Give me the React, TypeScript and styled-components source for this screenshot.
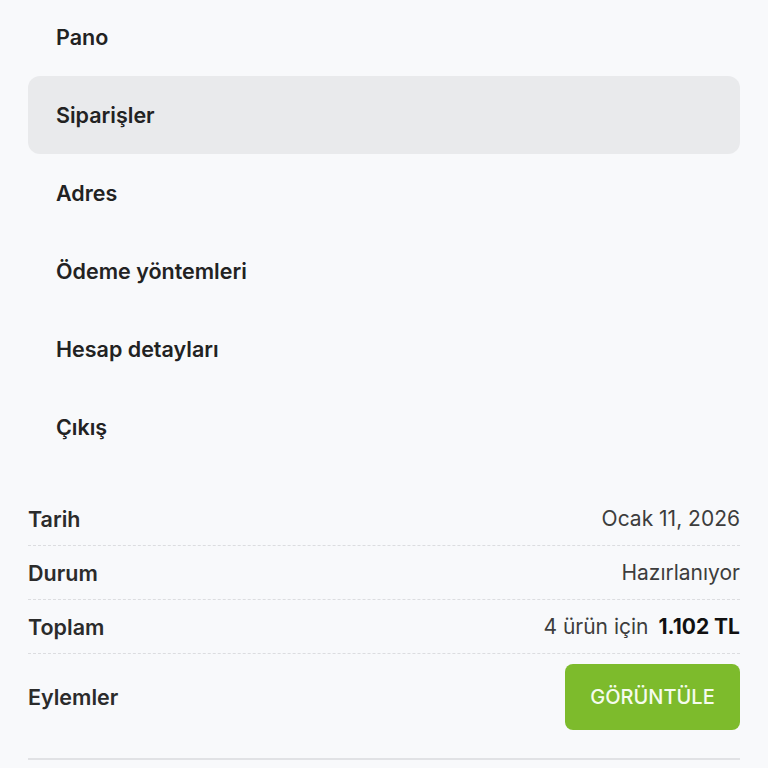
import styled, { createGlobalStyle } from "styled-components";

const GlobalStyle = createGlobalStyle`
   html, body {
      margin: 0;
      padding: 0;
      background: #f8f9fb;
      font-family: Inter, Roboto, "Noto Sans", sans-serif;
      color: #222;
      overflow: hidden;
   }
`;

const Page = styled.div`
   width: 768px;
   padding: 0 28px;
   box-sizing: border-box;
`;

const Nav = styled.ul`
   list-style: none;
   margin: -2px 0 26px;
   padding: 0;
   display: flex;
   flex-direction: column;
`;

const NavItem = styled.li<{ active?: boolean }>`
   height: 78px;
   display: flex;
   align-items: center;
   padding-left: 28px;
   border-radius: 12px;
   font-size: 21.5px;
   font-weight: 600;
   color: #222;
   background: ${({ active }) => (active ? "#e9eaec" : "transparent")};
`;

const Table = styled.div`
   display: flex;
   flex-direction: column;
   border-bottom: 2px solid #e1e2e5;
`;

const Row = styled.div<{ last?: boolean }>`
   display: flex;
   justify-content: space-between;
   align-items: center;
   height: ${({ last }) => (last ? "86px" : "53px")};
   padding-bottom: ${({ last }) => (last ? "18px" : "0")};
   border-bottom: ${({ last }) => (last ? "none" : "1.5px dashed #dcdde0")};
`;

const Label = styled.span`
   font-size: 21.5px;
   font-weight: 600;
   color: #2b2b2b;
`;

const Value = styled.span`
   font-size: 21px;
   font-weight: 400;
   color: #3d3d3d;
`;

const Amount = styled.strong`
   font-weight: 700;
   color: #111;
   margin-left: 10px;
`;

const Button = styled.button`
   width: 175px;
   height: 66px;
   border: none;
   border-radius: 8px;
   background: #7dbb2c;
   color: #f5fbee;
   font-family: Inter, Roboto, sans-serif;
   font-size: 20px;
   font-weight: 500;
   text-transform: uppercase;
   cursor: pointer;
`;

const menu = [
   "Pano",
   "Siparişler",
   "Adres",
   "Ödeme yöntemleri",
   "Hesap detayları",
   "Çıkış",
];

export default function App() {
   return (
      <Page>
         <GlobalStyle />
         <Nav>
            {menu.map((m) => (
               <NavItem key={m} active={m === "Siparişler"}>
                  {m}
               </NavItem>
            ))}
         </Nav>
         <Table>
            <Row>
               <Label>Tarih</Label>
               <Value>Ocak 11, 2026</Value>
            </Row>
            <Row>
               <Label>Durum</Label>
               <Value>Hazırlanıyor</Value>
            </Row>
            <Row>
               <Label>Toplam</Label>
               <Value>
                  4 ürün için<Amount>1.102 TL</Amount>
               </Value>
            </Row>
            <Row last>
               <Label>Eylemler</Label>
               <Button>Görüntüle</Button>
            </Row>
         </Table>
      </Page>
   );
}
